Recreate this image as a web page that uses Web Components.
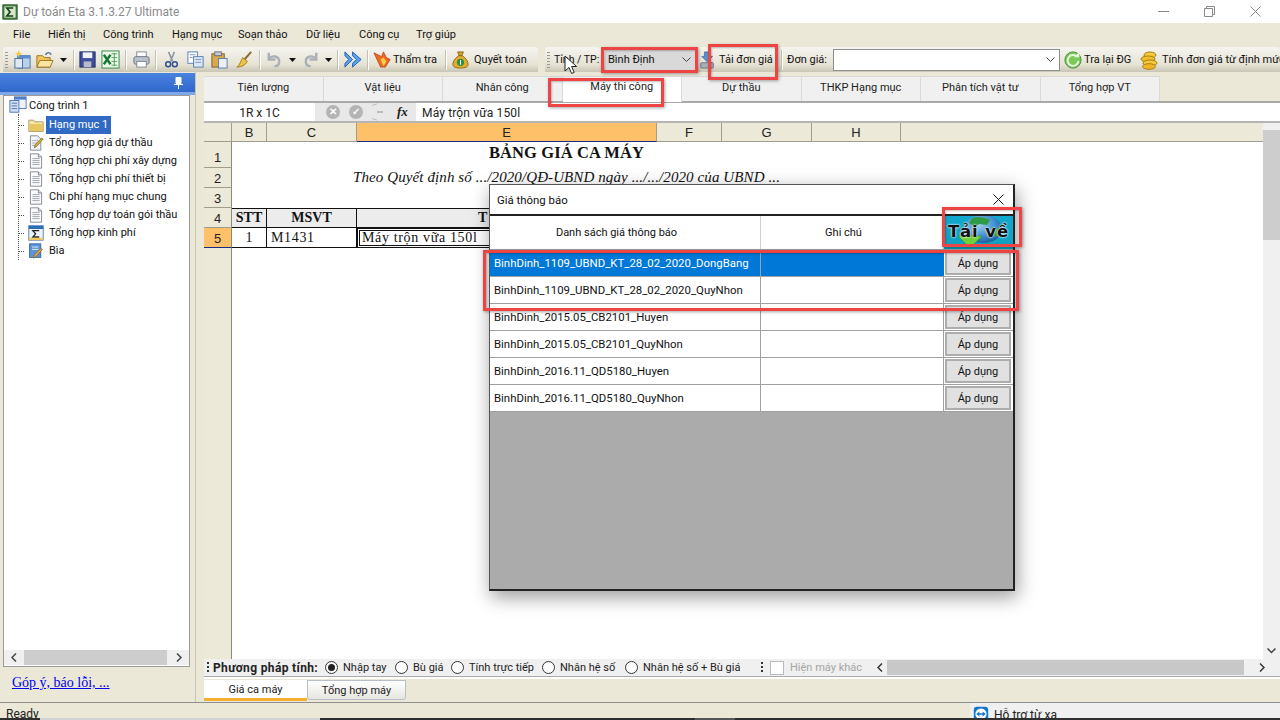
<!DOCTYPE html>
<html lang="vi">
<head>
<meta charset="utf-8">
<title>Dự toán Eta</title>
<style>
  html, body { margin: 0; padding: 0; background: #fff; }
  body { font: 11px Roboto, "Liberation Sans", sans-serif; color: #111; }
</style>
</head>
<body>
<eta-app>
  <win-titlebar slot="top"></win-titlebar>
  <menu-bar slot="top"></menu-bar>
  <tool-bar slot="top"></tool-bar>
  <side-panel slot="side"></side-panel>
  <tab-strip slot="work"></tab-strip>
  <formula-bar slot="work"></formula-bar>
  <sheet-grid slot="work"></sheet-grid>
  <calc-bar slot="work"></calc-bar>
  <sheet-tabs slot="work"></sheet-tabs>
  <status-bar slot="bottom"></status-bar>

  <price-dialog slot="over"></price-dialog>
  <mark-box slot="over" style="left:601px;top:47px;width:97px;height:26px"></mark-box>
  <mark-box slot="over" style="left:708px;top:44px;width:70px;height:36px"></mark-box>
  <mark-box slot="over" style="left:548px;top:78px;width:116px;height:29px"></mark-box>
  <mark-box slot="over" style="left:942px;top:207px;width:80px;height:40px"></mark-box>
  <mark-box slot="over" style="left:483px;top:250px;width:536px;height:61px"></mark-box>
  <svg slot="over" style="position:absolute;left:564px;top:55px" width="14" height="21" viewBox="0 0 14 21">
    <path d="M1 1v15l4-3.5 2.6 6 2.6-1.1-2.6-5.900h5z" fill="#fff" stroke="#222" stroke-width="1"/>
  </svg>
</eta-app>

<script>
const UI = 'Roboto, "Liberation Sans", sans-serif';
const ICONS = {
  sigma: '<rect x="1" y="1" width="18" height="18" fill="#3f7f3a" stroke="#1f4f22"/><rect x="3" y="3" width="14" height="14" fill="#d5e8c8"/><path d="M14 5H6l4 5-4 5h8" fill="none" stroke="#153d1a" stroke-width="2"/>',
  newdoc: '<rect x="5" y="6" width="13" height="13" fill="#b8d2ee" stroke="#4a6f9c"/><rect x="5" y="6" width="13" height="3" fill="#5c8fd0"/><rect x="2" y="9" width="8" height="10" fill="#dfe9f5" stroke="#4a6f9c"/><path d="M6 0l1 3 3 1-3 1-1 3-1-3-3-1 3-1z" fill="#f6c636"/>',
  open: '<path d="M2 6h6l2 2h6v10H2z" fill="#f2c75c" stroke="#9b7420"/><path d="M2 18l3-7h14l-3 7z" fill="#fbe5a0" stroke="#9b7420"/><path d="M11 5c2-3 5-3 6 0" fill="none" stroke="#4a6f9c" stroke-width="1.500"/>',
  save: '<rect x="2" y="2" width="16" height="16" fill="#3d4f9e" stroke="#1c2760"/><rect x="5" y="2.500" width="10" height="6" fill="#eef1f7"/><rect x="6" y="12" width="8" height="6" fill="#b8bcc8"/>',
  excel: '<rect x="1" y="1" width="18" height="18" fill="#eef7ea" stroke="#2f8a44"/><path d="M11 4h6M11 8h6M11 12h6M11 16h6M14 3v14" stroke="#4aa35f"/><path d="M3 5l7 10M10 5l-7 10" stroke="#167a33" stroke-width="2.500"/>',
  print: '<rect x="5" y="2" width="10" height="6" fill="#fff" stroke="#7d8794"/><rect x="2" y="7" width="16" height="8" rx="2" fill="#b9c2cc" stroke="#69737f"/><rect x="5" y="12" width="10" height="6" fill="#fff" stroke="#7d8794"/>',
  cut: '<path d="M7 2l4 10M13 2L9 12" stroke="#8993a0" stroke-width="1.600"/><circle cx="6.500" cy="15" r="2.600" fill="none" stroke="#33508f" stroke-width="1.600"/><circle cx="13.500" cy="15" r="2.600" fill="none" stroke="#33508f" stroke-width="1.600"/>',
  copy: '<rect x="2" y="2" width="10" height="12" fill="#fff" stroke="#5a7eb0"/><rect x="8" y="7" width="10" height="11" fill="#dbe7f6" stroke="#5a7eb0"/><path d="M4 5h6M4 8h3M10 10h6M10 13h6" stroke="#7a94bb"/>',
  paste: '<rect x="2" y="4" width="13" height="14" fill="#d8a94f" stroke="#80602a"/><rect x="5" y="2" width="7" height="4" fill="#c7ccd4" stroke="#6b6f78"/><rect x="9" y="9" width="9" height="10" fill="#eaf0f8" stroke="#5a7eb0"/>',
  broom: '<path d="M17 2l-7 8" stroke="#8a6a32" stroke-width="2"/><path d="M8 8l5 4c-2 4-6 6-11 6 3-2 4-6 6-10z" fill="#eec341" stroke="#a07d1c"/>',
  undo: '<path d="M5 3v7h7" fill="none" stroke="#aab0b8" stroke-width="2.500"/><path d="M5 10c3-5 11-4 11 2 0 3-2 5-5 5" fill="none" stroke="#aab0b8" stroke-width="2.500"/>',
  redo: '<path d="M15 3v7H8" fill="none" stroke="#aab0b8" stroke-width="2.500"/><path d="M15 10c-3-5-11-4-11 2 0 3 2 5 5 5" fill="none" stroke="#aab0b8" stroke-width="2.500"/>',
  fast: '<path d="M1 2l8 8-8 8v-4l4-4-4-4zM9 2l9 8-9 8v-4l4-4-4-4z" fill="#5aa2ee" stroke="#1e5fb4"/>',
  flame: '<path d="M1 3l8 4 2-5 3 6 4 2-5 8H8z" fill="#ef6a22" stroke="#b63a10" stroke-width=".800"/><path d="M8 10l3-2 3 4-3 5z" fill="#f7d04a"/>',
  bag: '<path d="M7 2h6l-1.500 4h-3z" fill="#d6a32e" stroke="#8d6a12"/><path d="M8 6h4c4 3 6 6 6 9 0 3-3 4-8 4s-8-1-8-4c0-3 2-6 6-9z" fill="#e2ad2d" stroke="#8d6a12"/><circle cx="10" cy="13" r="3.800" fill="#2f8f45"/><path d="M10 10.500v5" stroke="#fff"/>',
  download: '<path d="M6 1h6v5h3l-6 6-6-6h3z" fill="#5f8fd0" stroke="#2f5a9c" stroke-width=".700"/><rect x="2" y="13" width="14" height="6" rx="1" fill="#a9afb8" stroke="#6b7280"/>',
  refresh: '<circle cx="10" cy="10" r="9" fill="#7cc95a" stroke="#3b8f30"/><path d="M14.500 6.500A6 6 0 1 0 16 11" fill="none" stroke="#e9f7df" stroke-width="2.200"/><path d="M11 7h6V1z" fill="#e9f7df"/>',
  coins: '<ellipse cx="10" cy="5" rx="6" ry="3" fill="#f4c93c" stroke="#a87f10"/><ellipse cx="8" cy="9" rx="7" ry="3" fill="#f0bd2c" stroke="#a87f10"/><ellipse cx="10" cy="13" rx="7" ry="3" fill="#f4c93c" stroke="#a87f10"/><ellipse cx="9" cy="16.500" rx="6.500" ry="2.800" fill="#eeb526" stroke="#a87f10"/>',
  project: '<rect x="6" y="1" width="13" height="13" fill="#eef3fb" stroke="#4b6fb0"/><rect x="6" y="1" width="13" height="3" fill="#4b7fd0"/><rect x="1" y="5" width="10" height="13" fill="#cfe0f6" stroke="#4b6fb0"/><path d="M3 8h6M3 11h6M3 14h6" stroke="#4b6fb0"/>',
  folder: '<path d="M1 4h6l1.500 2H19v12H1z" fill="#f4e4a6" stroke="#a08a50"/><path d="M1.500 8h17v9.500h-17z" fill="#e8c660"/><path d="M2 8h16" stroke="#fbeebb"/>',
  editdoc: '<path d="M3 1h9l4 4v14H3z" fill="#f2f4f8" stroke="#6d7480"/><path d="M5 7h8M5 10h8M5 13h6" stroke="#9aa2ad"/><path d="M19 5l-8 9-3 2 1-4 8-8z" fill="#e0b73c" stroke="#6e6a20"/>',
  doc: '<path d="M3 1h10l4 4v14H3z" fill="#fafafa" stroke="#6d7480"/><path d="M13 1v4h4" fill="#dde" stroke="#6d7480"/><path d="M5.500 7h9M5.500 9.500h9M5.500 12h9M5.500 14.500h9" stroke="#8d949e"/>',
  sum: '<rect x="1" y="1" width="18" height="18" fill="#eef4fb" stroke="#2d6db5"/><rect x="1" y="1" width="18" height="4" fill="#2d6db5"/><path d="M14 7H6l3.500 4L6 15h8" fill="none" stroke="#222" stroke-width="1.600"/><rect x="1" y="16" width="18" height="3" fill="#f3c95c"/>',
  cover: '<rect x="2" y="1" width="14" height="17" fill="#5a93d8" stroke="#28609f"/><path d="M5 5h8M5 8h8" stroke="#fff"/><path d="M18 8l-8 9-3 2 1-4 8-8z" fill="#eeb04a" stroke="#8b5f1a"/>',
  team: '<rect x="1" y="1" width="18" height="18" rx="4" fill="#1477c9"/><circle cx="10" cy="10" r="7" fill="#fff"/><path d="M4 10l4-3v2h4V7l4 3-4 3v-2H8v2z" fill="#1477c9"/>'
};

class EIcon extends HTMLElement {
  connectedCallback(){
    const size = this.getAttribute('size') || 18;
    this.attachShadow({mode:'open'});
    this.shadowRoot.innerHTML = `
      <style>:host { display:inline-flex; flex:none; width:${size}px; height:${size}px; } svg { display:block; }</style>
      <svg width="${size}" height="${size}" viewBox="0 0 20 20">${ICONS[this.getAttribute('name')] || ''}</svg>`;
  }
}

class EtaApp extends HTMLElement {
  connectedCallback(){
    this.attachShadow({mode:'open'});
    this.shadowRoot.innerHTML = `
      <style>
        :host { display:flex; flex-direction:column; position:relative; width:1280px; height:720px; overflow:hidden; background:#ebe8d8; }
        .top { display:block; flex:none; }
        .middle { flex:1; display:flex; min-height:0; }
        .side { flex:0 0 195px; display:flex; }
        .rule { flex:0 0 9px; box-sizing:border-box; border-left:1px solid #c9c6b6; }
        .work { flex:1; min-width:0; display:flex; flex-direction:column; }
      </style>
      <div class="top"><slot name="top"></slot></div>
      <div class="middle">
        <div class="side"><slot name="side"></slot></div>
        <div class="rule"></div>
        <div class="work"><slot name="work"></slot></div>
      </div>
      <slot name="bottom"></slot>
      <slot name="over"></slot>`;
  }
}

class WinTitlebar extends HTMLElement {
  connectedCallback(){
    this.attachShadow({mode:'open'});
    this.shadowRoot.innerHTML = `
      <style>
        :host { display:flex; align-items:center; height:23px; background:#fff; color:#8a8a8a; font:12px ${UI}; padding:0 2px; }
        .name { margin-left:5px; flex:1; }
        .btn { width:46px; display:flex; justify-content:center; }
      </style>
      <e-icon name="sigma" size="16"></e-icon>
      <span class="name">Dự toán Eta 3.1.3.27 Ultimate</span>
      <span class="btn"><svg width="11" height="11"><path d="M0 5.500h11" stroke="#888"/></svg></span>
      <span class="btn"><svg width="11" height="11"><path d="M.5 2.500h8v8h-8zM2.500 2.500v-2h8v8h-2" fill="none" stroke="#888"/></svg></span>
      <span class="btn"><svg width="11" height="11"><path d="M.5.500l10 10M10.500.500l-10 10" stroke="#888"/></svg></span>`;
  }
}

class MenuBar extends HTMLElement {
  connectedCallback(){
    const items = [['File',35],['Hiển thị',55],['Công trình',69],['Hạng mục',66],['Soạn thảo',68],['Dữ liệu',53],['Công cụ',57],['Trợ giúp',60]];
    this.attachShadow({mode:'open'});
    this.shadowRoot.innerHTML = `
      <style>
        :host { display:flex; align-items:center; height:23px; padding-left:13px; background:#ebe8d8; font:11px ${UI}; color:#111; }
        span { flex:none; }
      </style>
      ${items.map(i => `<span style="width:${i[1]}px">${i[0]}</span>`).join('')}`;
  }
}

class ToolBar extends HTMLElement {
  connectedCallback(){
    const ic = (n, w, s) => `<span class="cell" style="width:${w}px"><e-icon name="${n}" size="${s || 19}"></e-icon></span>`;
    const drop = w => `<span class="cell" style="width:${w}px"><svg width="7" height="4"><path d="M0 0h7L3.500 4z" fill="#111"/></svg></span>`;
    const sep = '<i class="sep"></i>';
    this.attachShadow({mode:'open'});
    this.shadowRoot.innerHTML = `
      <style>
        :host { display:flex; height:26px; gap:7px; background:#ebe8d8; font:11px ${UI}; color:#111; overflow:hidden; }
        .band { display:flex; align-items:center; height:25px; margin-top:1px; border-radius:3px 3px 0 0; background:linear-gradient(#f5f4ef,#e6e3d4 70%,#c9c6b6); box-sizing:border-box; }
        .a { flex:0 0 535px; margin-left:3px; }
        .b { flex:1; min-width:0; white-space:nowrap; }
        .grip { flex:none; width:3px; height:16px; margin:0 4px 0 2px; background:repeating-linear-gradient(#999 0 1px,transparent 1px 3px); }
        .cell { flex:none; display:flex; justify-content:center; align-items:center; }
        .sep { flex:none; width:1px; height:20px; background:#c4c1b2; border-right:1px solid #fff; margin:0 2px; }
        .txt { flex:none; }
        .combo { flex:none; display:flex; align-items:center; justify-content:space-between; box-sizing:border-box; height:22px; padding:0 4px 0 3px; }
        .combo.gray { background:#d9d9d9; width:90px; margin:0 4px 0 6px; }
        .combo.white { background:#fff; border:1px solid #8e8e8e; width:227px; margin:0 3px 0 4px; }
      </style>
      <div class="band a">
        <i class="grip"></i>
        ${ic('newdoc',20)}${ic('open',24)}${drop(15)}${sep}
        ${ic('save',21)}${ic('excel',25)}${sep}
        ${ic('print',24)}${sep}
        ${ic('cut',24)}${ic('copy',24)}${ic('paste',24)}${ic('broom',26)}${sep}
        ${ic('undo',20)}${drop(18)}${ic('redo',20)}${drop(14)}${sep}
        ${ic('fast',24)}${sep}
        ${ic('flame',22)}<span class="txt" style="width:50px">Thẩm tra</span>${sep}
        ${ic('bag',22)}<span class="txt" style="margin-left:3px">Quyết toán</span>
      </div>
      <div class="band b">
        <i class="grip"></i>
        <span class="txt" style="width:45px;font-size:10.500px">Tỉnh / TP:</span>
        <span class="combo gray">Bình Định <svg width="9" height="5"><path d="M.5.500l4 4 4-4" fill="none" stroke="#444"/></svg></span>
        ${ic('download',18,18)}
        <span class="txt" style="margin-left:2px;width:60px">Tải đơn giá</span>${sep}
        <span class="txt" style="margin-left:2px;width:42px">Đơn giá:</span>
        <span class="combo white"><span></span><svg width="9" height="5"><path d="M.5.500l4 4 4-4" fill="none" stroke="#444"/></svg></span>
        ${ic('refresh',20,18)}
        <span class="txt" style="margin-left:1px;width:56px">Tra lại ĐG</span>
        ${ic('coins',20,20)}
        <span class="txt" style="margin-left:2px">Tính đơn giá từ định mức</span>
      </div>`;
  }
}

class TreeItem extends HTMLElement {
  connectedCallback(){
    const sel = this.hasAttribute('selected');
    this.attachShadow({mode:'open'});
    this.shadowRoot.innerHTML = `
      <style>
        :host { display:flex; align-items:center; height:18px; padding-left:14px; }
        .tick { width:6px; border-top:1px dotted #555; margin-right:4px; }
        .t { margin-left:2px; padding:0 3px; line-height:18px; white-space:nowrap; }
        .t.on { background:#316ac5; color:#fff; }
      </style>
      <i class="tick"></i>
      <e-icon name="${this.getAttribute('icon')}" size="16"></e-icon>
      <span class="t ${sel ? 'on' : ''}"><slot></slot></span>`;
  }
}

class SidePanel extends HTMLElement {
  connectedCallback(){
    this.attachShadow({mode:'open'});
    this.shadowRoot.innerHTML = `
      <style>
        :host { display:flex; flex-direction:column; flex:1; background:#ebe8d8; font:11px ${UI}; color:#111; }
        .head { height:19px; flex:none; display:flex; justify-content:flex-end; align-items:center; padding-right:11px; background:linear-gradient(#4a82e0,#2f68cc); border-bottom:3px solid #7fa6e6; margin-top:1px; }
        .box { flex:none; height:572px; margin-left:3px; width:187px; box-sizing:border-box; border:1px solid #9a9a9a; background:#fff; display:flex; flex-direction:column; }
        .tree { flex:1; position:relative; }
        .root { display:flex; align-items:center; height:18px; margin-bottom:2px; padding-left:5px; gap:2px; }
        .trunk { position:absolute; left:14px; top:18px; height:146px; border-left:1px dotted #555; }
        .hs { flex:none; height:15px; display:flex; align-items:center; background:#f0f0f0; margin:0 0 1px 0; color:#555; }
        .ar { flex:none; width:20px; display:flex; justify-content:center; }
        .th { flex:0 0 143px; height:15px; background:#cdcdcd; }
        .sp { flex:1; }
        a { margin:8px 0 0 12px; font:14px "Liberation Serif", serif; color:#0000ee; text-decoration:underline; }
      </style>
      <div class="head"><svg width="11" height="12"><path d="M3 .500h5v6H3zM1 7.500h9M5.500 8v4" fill="#fff" stroke="#fff"/></svg></div>
      <div class="box">
        <div class="tree">
          <i class="trunk"></i>
          <div class="root"><e-icon name="project" size="18"></e-icon><span>Công trình 1</span></div>
          <tree-item icon="folder" selected>Hạng mục 1</tree-item>
          <tree-item icon="editdoc">Tổng hợp giá dự thầu</tree-item>
          <tree-item icon="doc">Tổng hợp chi phí xây dựng</tree-item>
          <tree-item icon="doc">Tổng hợp chi phí thiết bị</tree-item>
          <tree-item icon="doc">Chi phí hạng mục chung</tree-item>
          <tree-item icon="doc">Tổng hợp dự toán gói thầu</tree-item>
          <tree-item icon="sum">Tổng hợp kinh phí</tree-item>
          <tree-item icon="cover">Bìa</tree-item>
        </div>
        <div class="hs">
          <span class="ar"><svg width="6" height="9"><path d="M5 .500l-4 4 4 4" fill="none" stroke="#444" stroke-width="1.500"/></svg></span>
          <span class="th"></span><span class="sp"></span>
          <span class="ar"><svg width="6" height="9"><path d="M1 .500l4 4-4 4" fill="none" stroke="#444" stroke-width="1.500"/></svg></span>
        </div>
      </div>
      <a href="#">Góp ý, báo lỗi, ...</a>`;
  }
}

class TabStrip extends HTMLElement {
  connectedCallback(){
    const tabs = ['Tiên lượng','Vật liệu','Nhân công','Máy thi công','Dự thầu','THKP Hạng mục','Phân tích vật tư','Tổng hợp VT'];
    this.attachShadow({mode:'open'});
    this.shadowRoot.innerHTML = `
      <style>
        :host { display:flex; flex:none; height:31px; box-sizing:border-box; padding-top:4px; background:#ebe8d8; border-bottom:2px solid #a9a9a9; font:11px ${UI}; color:#222; }
        span { flex:0 0 119.500px; box-sizing:border-box; height:25px; padding-bottom:3px; display:flex; align-items:center; justify-content:center; background:#f0f0f0; border:1px solid #d9d9d9; border-width:1px 1px 0 0; }
        span.on { background:#fff; height:26px; padding-bottom:6px; }
      </style>
      ${tabs.map((t,i) => `<span class="${i === 3 ? 'on' : ''}">${t}</span>`).join('')}`;
  }
}

class FormulaBar extends HTMLElement {
  connectedCallback(){
    this.attachShadow({mode:'open'});
    this.shadowRoot.innerHTML = `
      <style>
        :host { display:flex; flex:none; height:20px; box-sizing:border-box; background:#fff; border-bottom:2px solid #b5b5b5; font:12px ${UI}; color:#222; }
        .name { flex:0 0 111px; text-align:center; line-height:20px; }
        .btns { flex:0 0 101px; display:flex; align-items:center; gap:9px; padding-left:11px; box-sizing:border-box; background:#e8e8e8; }
        .dot { width:14px; height:14px; border-radius:50%; background:#b4b4b4; color:#fff; font:bold 10px/14px "Liberation Sans", sans-serif; text-align:center; }
        .fx { font:italic bold 13px "Liberation Serif", serif; margin-left:1px; }
        .val { flex:1; padding-left:6px; line-height:20px; letter-spacing:.15px; }
      </style>
      <div class="name">1R x 1C</div>
      <div class="btns">
        <span class="dot">✕</span><span class="dot">✓</span>
        <svg width="15" height="18"><path d="M5 1a8 8 0 0 0 0 16" fill="none" stroke="#bbb"/><rect x="5" y="8" width="6" height="2" fill="#bbb"/></svg>
        <span class="fx">fx</span>
      </div>
      <div class="val">Máy trộn vữa 150l</div>`;
  }
}

class SheetGrid extends HTMLElement {
  connectedCallback(){
    this.attachShadow({mode:'open'});
    this.shadowRoot.innerHTML = `
      <style>
        :host { display:flex; flex:1; min-height:0; background:#fff; }
        .grid { flex:1; min-width:0; display:grid; grid-template-columns:28px 35px 90px 300px 65px 90px 89px 1fr; grid-template-rows:19px 26px 20px 20px 20px 20px 1fr; }
        .h, .r { background:#ece9d8; color:#222; font:13px "Liberation Sans", sans-serif; box-sizing:border-box; display:flex; align-items:center; justify-content:center; border-right:1px solid #a09d8c; border-bottom:1px solid #a09d8c; }
        .r { border-right-color:#8d8a78; padding-top:1px; }
        .r.first { padding-top:6px; }
        .on { background:#ffc06a; border-bottom:1px solid #1a2a80; }
        .h.last { border-right:0; }
        .title { grid-column:2 / 8; text-align:center; font:bold 16.500px "Liberation Serif", serif; letter-spacing:.1px; color:#111; padding-top:1px; }
        .sub { grid-column:2 / 8; text-align:center; font:italic 15px "Liberation Serif", serif; letter-spacing:.1px; color:#111; padding-top:1px; }
        .blank { grid-column:2 / -1; }
        .th, .td { box-sizing:border-box; font:14px "Liberation Serif", serif; color:#111; border-right:1px solid #111; border-bottom:1px solid #111; display:flex; align-items:center; justify-content:center; }
        .th { background:#ececec; font-weight:bold; border-top:1px solid #111; }
        .td.l { justify-content:flex-start; padding-left:4px; letter-spacing:.65px; }
        .td.pick { border:1px double #111; outline:1px solid #111; outline-offset:-3px; }
        .scroll { flex:0 0 17px; background:#f0f0f0; display:flex; flex-direction:column; align-items:center; }
        .thumb { flex:0 0 110px; width:100%; margin-top:7px; background:#cdcdcd; }
        .down { margin-top:auto; margin-bottom:5px; }
      </style>
      <div class="grid">
        <div class="h"></div><div class="h">B</div><div class="h">C</div><div class="h on">E</div><div class="h">F</div><div class="h">G</div><div class="h">H</div><div class="h last"></div>
        <div class="r first">1</div><div class="title">BẢNG GIÁ CA MÁY</div><div></div>
        <div class="r">2</div><div class="sub">Theo Quyết định số .../2020/QĐ-UBND ngày .../.../2020 của UBND ...</div><div></div>
        <div class="r">3</div><div class="blank"></div>
        <div class="r">4</div><div class="th">STT</div><div class="th">MSVT</div>
        <div class="th" style="justify-content:flex-start;padding-left:121px">T</div><div style="grid-column:5 / -1"></div>
        <div class="r on">5</div><div class="td">1</div><div class="td l">M1431</div><div class="td l pick">Máy trộn vữa 150l</div><div style="grid-column:5 / -1"></div>
        <div class="r" style="border-bottom:0"></div><div style="grid-column:2 / -1"></div>
      </div>
      <div class="scroll">
        <i class="thumb"></i>
        <svg class="down" width="9" height="6"><path d="M.5.500l4 4 4-4" fill="none" stroke="#444" stroke-width="1.500"/></svg>
      </div>`;
  }
}

class CalcBar extends HTMLElement {
  connectedCallback(){
    const radio = (label, w, on) => `<span class="opt" style="width:${w}px"><i class="rd ${on ? 'on' : ''}"></i>${label}</span>`;
    this.attachShadow({mode:'open'});
    this.shadowRoot.innerHTML = `
      <style>
        :host { display:flex; flex:none; height:17px; align-items:center; background:#f0f0f0; font:11px ${UI}; color:#222; white-space:nowrap; overflow:hidden; }
        .grip { flex:none; width:2px; height:12px; margin:0 4px 0 3px; background:repeating-linear-gradient(#333 0 2px,transparent 2px 4px); }
        b { flex:none; width:112px; font-size:12px; letter-spacing:.35px; }
        .opt { flex:none; display:flex; align-items:center; gap:5px; box-sizing:border-box; }
        .rd { flex:none; width:11px; height:11px; border:1px solid #333; border-radius:50%; background:#fff; position:relative; }
        .rd.on::after { content:""; position:absolute; inset:2px; border-radius:50%; background:#222; }
        .hm { flex:none; display:flex; align-items:center; gap:6px; color:#a5a5a5; width:102px; background:#f0f0f0; }
        .box { flex:none; width:12px; height:12px; border:1px solid #bbb; background:#fff; }
        .ar { flex:none; width:15px; display:flex; justify-content:center; }
        .th { flex:1; height:15px; background:#c8c8c8; }
        .end { flex:0 0 36px; }
      </style>
      <i class="grip"></i><b>Phương pháp tính:</b>
      ${radio('Nhập tay',70,true)}${radio('Bù giá',56)}${radio('Tính trực tiếp',91)}${radio('Nhân hệ số',83)}${radio('Nhân hệ số + Bù giá',133)}
      <i class="grip" style="margin-right:7px"></i>
      <span class="hm"><i class="box"></i>Hiện máy khác</span>
      <span class="ar"><svg width="6" height="9"><path d="M5 .500l-4 4 4 4" fill="none" stroke="#333" stroke-width="1.500"/></svg></span>
      <span class="th"></span>
      <span class="end ar"><svg width="6" height="9"><path d="M1 .500l4 4-4 4" fill="none" stroke="#333" stroke-width="1.500"/></svg></span>`;
  }
}

class SheetTabs extends HTMLElement {
  connectedCallback(){
    this.attachShadow({mode:'open'});
    this.shadowRoot.innerHTML = `
      <style>
        :host { display:flex; flex:none; height:26px; box-sizing:border-box; align-items:flex-start; background:#ebe8d8; border-top:1px solid #aaa; box-shadow:inset 0 2px 0 #fff; padding-top:3px; font:11px ${UI}; color:#222; }
        span { flex:none; box-sizing:border-box; height:21px; display:flex; align-items:center; justify-content:center; }
        .on { width:103px; background:#fff; border-bottom:3px solid #f5ae2f; }
        .off { width:99px; height:20px; background:linear-gradient(#fff,#e6e6e0); border:1px solid #b9bfc7; border-radius:0 0 3px 3px; }
      </style>
      <span class="on">Giá ca máy</span><span class="off">Tổng hợp máy</span>`;
  }
}

class StatusBar extends HTMLElement {
  connectedCallback(){
    this.attachShadow({mode:'open'});
    this.shadowRoot.innerHTML = `
      <style>
        :host { display:block; flex:none; height:18px; border-top:1px solid #8f8f8f; box-sizing:border-box; background:#ebe8d8; font:12px ${UI}; color:#222; overflow:hidden; }
        .row { display:flex; height:15px; overflow:hidden; }
        .ready { flex:1; padding:4px 0 0 6px; }
        .help { flex:0 0 310px; display:flex; align-items:flex-start; gap:5px; background:#f0f0f0; padding:3px 0 0 3px; box-sizing:border-box; }
        .help span { margin-top:2px; }
        .task { display:flex; height:2px; background:#2f2f2f; }
        .task i { display:block; }
      </style>
      <div class="row">
        <div class="ready">Ready</div>
        <div class="help"><e-icon name="team" size="16"></e-icon><span>Hỗ trợ từ xa</span></div>
      </div>
      <div class="task"><i style="flex:0 0 40px"></i><i style="flex:0 0 280px;background:#d2d2d2"></i><i style="flex:0 0 375px"></i><i style="flex:0 0 40px;background:#555"></i></div>`;
  }
}

class PriceRow extends HTMLElement {
  connectedCallback(){
    const sel = this.hasAttribute('selected');
    this.attachShadow({mode:'open'});
    this.shadowRoot.innerHTML = `
      <style>
        :host { display:grid; grid-template-columns:271px 183px 1fr; height:27px; box-sizing:border-box; background:#fff; border-bottom:1px solid #a0a0a0; font:11.400px ${UI}; color:#111; }
        .c { display:flex; align-items:center; padding-left:4px; border-right:1px solid #a0a0a0; white-space:nowrap; }
        .c.sel { background:#0078d7; color:#fff; }
        .n.sel { border-right-color:#0078d7; }
        .a { display:flex; padding:1px 2px 1px 1px; background:#fff; }
        button { flex:1; padding:0; font:11px ${UI}; color:#111; background:#e1e1e1; border:2px solid #adadad; }
      </style>
      <div class="c ${sel ? 'sel' : ''}"><slot></slot></div>
      <div class="c n ${sel ? 'sel' : ''}"></div>
      <div class="a"><button>Áp dụng</button></div>`;
  }
}

class PriceDialog extends HTMLElement {
  connectedCallback(){
    this.attachShadow({mode:'open'});
    this.shadowRoot.innerHTML = `
      <style>
        :host { position:absolute; left:489px; top:184px; width:526px; height:407px; box-sizing:border-box; display:flex; flex-direction:column; background:#ababab; border:1px solid #555; border-right:2px solid #222; border-bottom:2px solid #222; box-shadow:2px 6px 18px rgba(0,0,0,.4); font:11.400px ${UI}; color:#111; }
        .title { flex:none; height:31px; display:flex; align-items:center; justify-content:space-between; padding:0 9px 0 7px; background:#fff; border-bottom:2px solid #222; box-sizing:border-box; }
        .head { flex:none; display:grid; grid-template-columns:271px 183px 1fr; height:34px; background:#fff; border-bottom:1px solid #a0a0a0; box-sizing:border-box; font-size:11px; }
        .head div { display:flex; align-items:center; justify-content:center; border-right:1px solid #d0d0d0; }
        .head .t { padding:0 17px 0 0; }
        .dl { position:relative; background:linear-gradient(#12a8cf,#0f9fbe); border:0 !important; overflow:hidden; }
        .dl svg { position:absolute; left:0; top:0; }
        .dl b { position:relative; font:bold 16.500px "DejaVu Sans", sans-serif; letter-spacing:.9px; color:#111; text-shadow:0 0 2px #fff, 0 0 2px #fff; margin-top:-3px; }
      </style>
      <div class="title">
        <span>Giá thông báo</span>
        <svg width="11" height="11"><path d="M.5.500l10 10M10.500.500l-10 10" stroke="#111"/></svg>
      </div>
      <div class="head">
        <div class="t">Danh sách giá thông báo</div>
        <div class="t">Ghi chú</div>
        <div class="dl">
          <svg width="70" height="33" viewBox="0 0 70 33">
            <defs><radialGradient id="g" cx=".4" cy=".35" r=".75"><stop offset="0" stop-color="#9cd0ea"/><stop offset=".55" stop-color="#3f8fd0"/><stop offset="1" stop-color="#144f8e"/></radialGradient></defs>
            <ellipse cx="39" cy="13" rx="19" ry="14" fill="url(#g)"/>
            <path d="M28 2c5-2 13-1 18 2l-3 5-8-1-4 3-6-4zM48 11l8 2-3 8-6-2zM26 18l8 2-2 5-5-2z" fill="#2f9a48"/>
            <path d="M14 20h24l-12 12z" fill="#6fd03c" stroke="#2f8f2a" stroke-width=".600"/>
          </svg>
          <b>Tải về</b>
        </div>
      </div>
      <price-row selected>BinhDinh_1109_UBND_KT_28_02_2020_DongBang</price-row>
      <price-row>BinhDinh_1109_UBND_KT_28_02_2020_QuyNhon</price-row>
      <price-row>BinhDinh_2015.05_CB2101_Huyen</price-row>
      <price-row>BinhDinh_2015.05_CB2101_QuyNhon</price-row>
      <price-row>BinhDinh_2016.11_QD5180_Huyen</price-row>
      <price-row>BinhDinh_2016.11_QD5180_QuyNhon</price-row>`;
  }
}

class MarkBox extends HTMLElement {
  connectedCallback(){
    this.attachShadow({mode:'open'});
    this.shadowRoot.innerHTML = `
      <style>
        :host { position:absolute; box-sizing:border-box; border:3px solid #ef4444; box-shadow:1px 1px 3px rgba(0,0,0,.35), inset 1px 1px 2px rgba(0,0,0,.25); }
      </style>`;
  }
}

customElements.define('e-icon', EIcon);
customElements.define('eta-app', EtaApp);
customElements.define('win-titlebar', WinTitlebar);
customElements.define('menu-bar', MenuBar);
customElements.define('tool-bar', ToolBar);
customElements.define('tree-item', TreeItem);
customElements.define('side-panel', SidePanel);
customElements.define('tab-strip', TabStrip);
customElements.define('formula-bar', FormulaBar);
customElements.define('sheet-grid', SheetGrid);
customElements.define('calc-bar', CalcBar);
customElements.define('sheet-tabs', SheetTabs);
customElements.define('status-bar', StatusBar);
customElements.define('price-row', PriceRow);
customElements.define('price-dialog', PriceDialog);
customElements.define('mark-box', MarkBox);
</script>
</body>
</html>
